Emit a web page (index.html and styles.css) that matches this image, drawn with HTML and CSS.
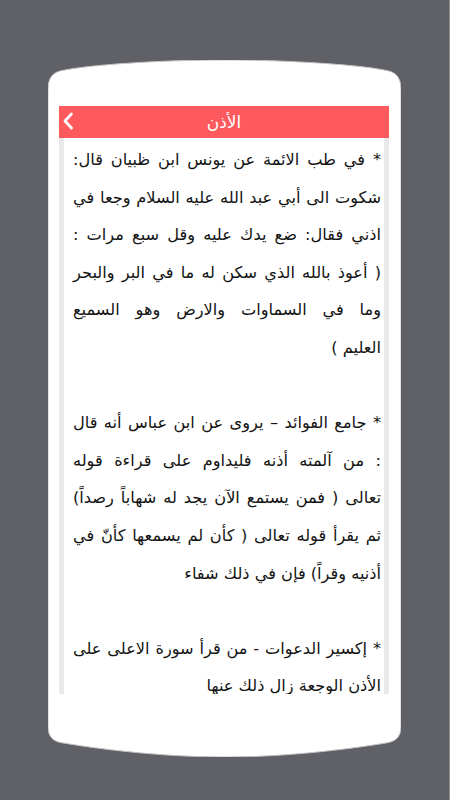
FILE: index.html
```html
<!DOCTYPE html>
<html lang="ar">
<head>
<meta charset="utf-8">
<title>الأذن</title>
<link rel="stylesheet" href="styles.css">
</head>
<body>
<div class="phone">
  <div class="screen">
    <header class="topbar">
      <svg class="back" width="12" height="18" viewBox="0 0 12 18"><polyline points="9.5,2 3,9 9.5,16" fill="none" stroke="#fff" stroke-width="2.8" stroke-linecap="round" stroke-linejoin="round"/></svg>
      <h1 class="title">الأذن</h1>
      <span></span>
    </header>
    <main class="panel" dir="rtl">
      <p class="para">
        <span class="ln">* في طب الائمة عن يونس ابن ظبيان قال:</span>
        <span class="ln">شكوت الى أبي عبد الله عليه السلام وجعا في</span>
        <span class="ln">اذني فقال: ضع يدك عليه وقل سبع مرات :</span>
        <span class="ln">( أعوذ بالله الذي سكن له ما في البر والبحر</span>
        <span class="ln">وما في السماوات والارض وهو السميع</span>
        <span class="ln end">العليم )</span>
      </p>
      <p class="para">
        <span class="ln">* جامع الفوائد – يروى عن ابن عباس أنه قال</span>
        <span class="ln">: من آلمته أذنه فليداوم على قراءة قوله</span>
        <span class="ln">تعالى ( فمن يستمع الآن يجد له شهاباً رصداً)</span>
        <span class="ln">ثم يقرأ قوله تعالى ( كأن لم يسمعها كأنّ في</span>
        <span class="ln end">أذنيه وقراً) فإن في ذلك شفاء</span>
      </p>
      <p class="para">
        <span class="ln">* إكسير الدعوات - من قرأ سورة الاعلى على</span>
        <span class="ln end">الأذن الوجعة زال ذلك عنها</span>
      </p>
    </main>
  </div>
</div>
</body>
</html>
```
FILE: styles.css
```css
html, body {
  margin: 0;
  padding: 0;
}
body {
  width: 450px;
  height: 800px;
  overflow: hidden;
  background: #606166;
  box-shadow: inset -1px 0 0 #8d8d92;
  font-family: "DejaVu Sans", sans-serif;
}
.phone {
  box-sizing: border-box;
  width: 353px;
  height: 697px;
  margin: 60px 0 0 48px;
  padding: 46px 12px 0 11px;
  background: url("data:image/svg+xml,%3Csvg xmlns='http://www.w3.org/2000/svg' width='353' height='697' viewBox='0 0 353 697'%3E%3Cpath d='M0,30 C0,16 6,11.5 17,10 C42,5 110,0 176.5,0 C243,0 311,5 336,10 C347,11.5 353,16 353,30 L353,666 C353,678 347,682 336,683.3 C308,688 243,697 176.5,697 C110,697 45,688 17,683.3 C6,682 0,678 0,666 Z' fill='%23ffffff' stroke='%23c4c4c6' stroke-width='1'/%3E%3C/svg%3E") no-repeat 0 0 / 353px 697px;
}
.screen {
  display: flex;
  flex-direction: column;
  height: 588px;
}
.topbar {
  flex: none;
  height: 32px;
  background: #fe5a5e;
  display: grid;
  grid-template-columns: 1fr auto 1fr;
  align-items: center;
}
.back {
  display: block;
  margin-left: 3px;
  margin-top: -3px;
}
.title {
  margin: 0;
  color: #fff;
  font-size: 17px;
  font-weight: normal;
  line-height: 32px;
}
.panel {
  flex: 1;
  overflow: hidden;
  border-left: 5px solid #e9e9e9;
  border-right: 5px solid #e9e9e9;
  padding: 3px 3px 0 9px;
  background: #fff;
  color: #141414;
  font-size: 16.2px;
  line-height: 37.6px;
}
.para {
  margin: 0 0 37.6px;
}
.ln {
  display: block;
  text-align: justify;
  text-align-last: justify;
}
.ln.end {
  text-align-last: start;
}
```
